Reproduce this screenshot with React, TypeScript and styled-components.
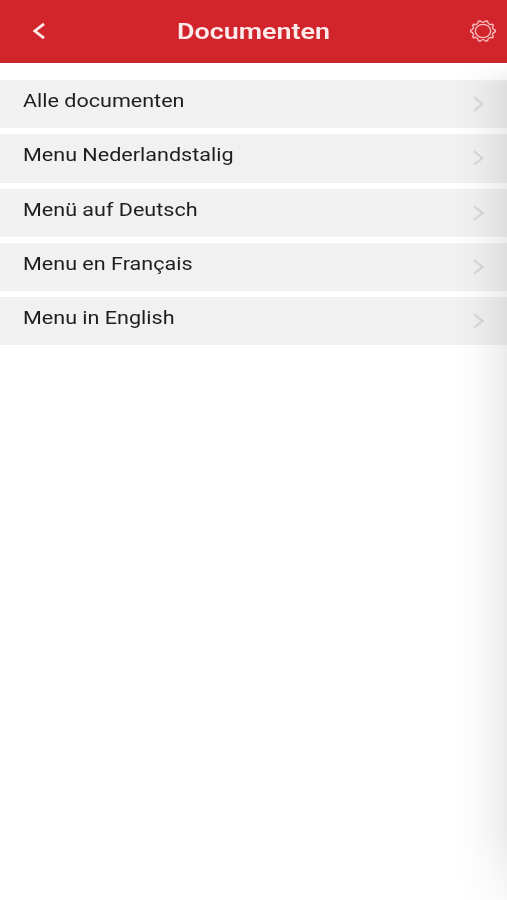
import React from "react";
import styled, { createGlobalStyle } from "styled-components";

const GlobalStyle = createGlobalStyle`
  * { box-sizing: border-box; }
  body { margin: 0; background: #fff; font-family: Roboto, sans-serif; }
`;

const Screen = styled.div`
  position: relative;
  width: 100%;
  height: 900px;
  overflow: hidden;
  background: #fff;
`;

const Header = styled.header`
  display: grid;
  grid-template-columns: 78px 1fr 78px;
  align-items: center;
  height: 63px;
  background: #d2242b;
  border-bottom: 1px solid #bd2930;
`;

const IconButton = styled.button<{ $end?: boolean }>`
  display: flex;
  justify-content: ${(p) => (p.$end ? "flex-end" : "center")};
  align-items: center;
  height: 62px;
  padding: ${(p) => (p.$end ? "0 10px 0 0" : "0")};
  border: 0;
  background: none;
`;

const Title = styled.h1`
  margin: 0;
  padding-top: 2px;
  text-align: center;
  font-size: 22px;
  line-height: 30px;
  font-weight: 600;
  color: #fdeaea;
  transform: scaleX(1.22);
`;

const List = styled.ul`
  display: flex;
  flex-direction: column;
  gap: 6px;
  margin: 0;
  padding: 17px 0 0;
  list-style: none;
`;

const Row = styled.li`
  display: flex;
  justify-content: space-between;
  height: 48.3px;
  padding: 0 22px 0 22.5px;
  background: #f1f1f1;
`;

const Label = styled.span`
  padding-top: 9px;
  font-size: 18px;
  line-height: 24px;
  color: #1e1e1e;
  white-space: nowrap;
  transform: scaleX(1.197);
  transform-origin: left center;
`;

const Chevron = styled.svg`
  margin-top: 15px;
`;

const EdgeShade = styled.div`
  position: absolute;
  top: 63px;
  right: 0;
  bottom: 0;
  width: 55px;
  pointer-events: none;
  background: linear-gradient(to right, transparent, rgba(0, 0, 0, 0.008) 28%, rgba(0, 0, 0, 0.04) 70%, rgba(0, 0, 0, 0.078));
  mask-image: linear-gradient(to bottom, transparent, #000 24px, #000 calc(100% - 70px), rgba(0, 0, 0, 0.3));
`;

const documents = [
  "Alle documenten",
  "Menu Nederlandstalig",
  "Menü auf Deutsch",
  "Menu en Français",
  "Menu in English",
];

const TEETH = 10;

const gearPath = (() => {
  const step = 360 / TEETH;
  const at = (deg: number, rx: number, ry: number) => {
    const a = (deg * Math.PI) / 180;
    return `${(14 + Math.cos(a) * rx).toFixed(2)} ${(12 + Math.sin(a) * ry).toFixed(2)}`;
  };
  return (
    Array.from({ length: TEETH }, (_, i) => {
      const deg = i * step;
      return `${i ? "L" : "M"}${at(deg - 4, 12.3, 10.5)} L${at(deg + 4, 12.3, 10.5)} Q${at(deg + step / 2, 8.3, 7.1)} ${at(deg + step - 4, 12.3, 10.5)}`;
    }).join(" ") + "Z"
  );
})();

export default function App() {
  return (
    <Screen>
      <GlobalStyle />
      <Header>
        <IconButton aria-label="Terug">
          <svg width="16" height="18" viewBox="0 0 16 18" fill="none">
            <path d="M13 1.8 3.8 9 13 16.2" stroke="#fdeaea" strokeWidth="2.8" />
          </svg>
        </IconButton>
        <Title>Documenten</Title>
        <IconButton $end aria-label="Instellingen">
          <svg width="28" height="24" viewBox="0 0 28 24" fill="none" stroke="#f8bcbd" strokeWidth="1.4">
            <path d={gearPath} strokeLinejoin="round" />
            <ellipse cx="14" cy="12" rx="7.7" ry="6.6" />
          </svg>
        </IconButton>
      </Header>
      <List>
        {documents.map((name) => (
          <Row key={name}>
            <Label>{name}</Label>
            <Chevron width="13" height="18" viewBox="0 0 13 18" fill="none">
              <path d="M2 2.4 10.6 9 2 15.6" stroke="#d8d8d8" strokeWidth="2" />
            </Chevron>
          </Row>
        ))}
      </List>
      <EdgeShade />
    </Screen>
  );
}
